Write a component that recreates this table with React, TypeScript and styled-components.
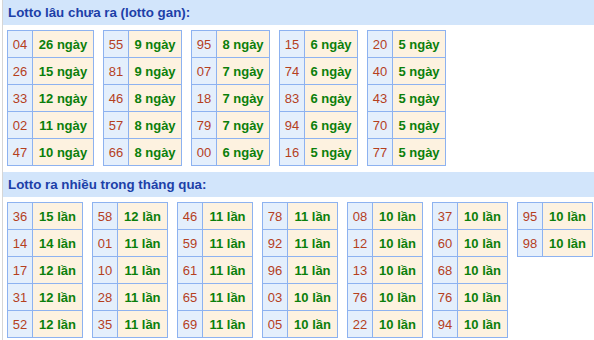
import styled, { createGlobalStyle } from "styled-components";

const GlobalStyle = createGlobalStyle`
  html, body {
    margin: 0;
    padding: 0;
    background: #ffffff;
    font-family: "Liberation Sans", Arial, sans-serif;
  }
`;

const Page = styled.div`
  width: 594px;
  height: 340px;
  overflow: hidden;
  padding-left: 2px;
  box-sizing: border-box;
`;

const Section = styled.section`
  border-left: 1px solid #d6d6d6;
`;

const Heading = styled.h2`
  margin: 0;
  height: 25px;
  line-height: 25px;
  padding-left: 5px;
  background: #d2e5fb;
  color: #1c40a8;
  font-size: 13.33px;
  font-weight: bold;
`;

const Tables = styled.div`
  display: flex;
  flex-wrap: wrap;
  align-items: flex-start;
  gap: 9px;
  padding: 5px 0 6px 4px;
`;

const Table = styled.table`
  border-collapse: collapse;
  font-size: 13px;
  font-family: "Liberation Sans", Arial, sans-serif;
`;

const Row = styled.tr`
  height: 27px;
`;

const Num = styled.td`
  border: 1px solid #8db2f0;
  background: #e4effc;
  color: #b5401e;
  width: 24px;
  padding: 0;
  text-align: center;
  white-space: nowrap;
`;

const Count = styled.td<{ $w: number }>`
  border: 1px solid #8db2f0;
  background: #fdf2e0;
  color: #0b7f0b;
  font-weight: bold;
  width: ${(p) => p.$w}px;
  padding: 0;
  text-align: center;
  white-space: nowrap;
`;

type Pair = [string, number];

const gan: Pair[][] = [
  [["04", 26], ["26", 15], ["33", 12], ["02", 11], ["47", 10]],
  [["55", 9], ["81", 9], ["46", 8], ["57", 8], ["66", 8]],
  [["95", 8], ["07", 7], ["18", 7], ["79", 7], ["00", 6]],
  [["15", 6], ["74", 6], ["83", 6], ["94", 6], ["16", 5]],
  [["20", 5], ["40", 5], ["43", 5], ["70", 5], ["77", 5]],
];

const nhieu: Pair[][] = [
  [["36", 15], ["14", 14], ["17", 12], ["31", 12], ["52", 12]],
  [["58", 12], ["01", 11], ["10", 11], ["28", 11], ["35", 11]],
  [["46", 11], ["59", 11], ["61", 11], ["65", 11], ["69", 11]],
  [["78", 11], ["92", 11], ["96", 11], ["03", 10], ["05", 10]],
  [["08", 10], ["12", 10], ["13", 10], ["76", 10], ["22", 10]],
  [["37", 10], ["60", 10], ["68", 10], ["76", 10], ["94", 10]],
  [["95", 10], ["98", 10]],
];

const Group = ({ data, unit }: { data: Pair[][]; unit: string }) => (
  <Tables>
    {data.map((col, i) => {
      // a column with two-digit counts needs a wider text cell
      const wide = col.some(([, c]) => c >= 10);
      const w = unit === "ngày" ? (wide ? 60 : 52) : 49;
      return (
        <Table key={i}>
          <tbody>
            {col.map(([n, c], j) => (
              <Row key={j}>
                <Num>{n}</Num>
                <Count $w={w}>
                  {c} {unit}
                </Count>
              </Row>
            ))}
          </tbody>
        </Table>
      );
    })}
  </Tables>
);

export default function App() {
  return (
    <Page>
      <GlobalStyle />
      <Section>
        <Heading>Lotto lâu chưa ra (lotto gan):</Heading>
        <Group data={gan} unit="ngày" />
        <Heading>Lotto ra nhiều trong tháng qua:</Heading>
        <Group data={nhieu} unit="lần" />
      </Section>
    </Page>
  );
}
